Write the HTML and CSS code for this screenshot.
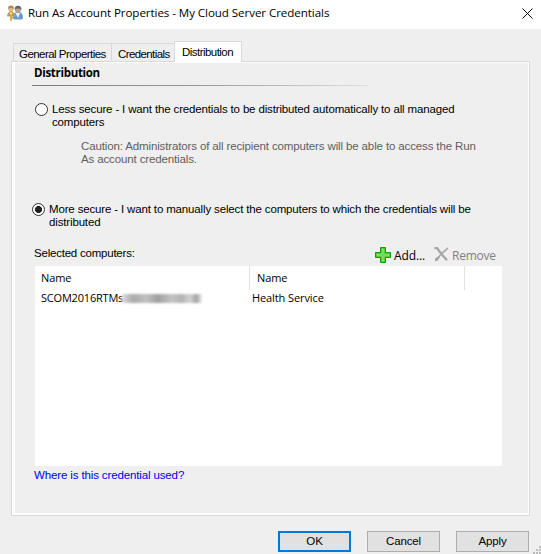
FILE: index.html
```
<!DOCTYPE html>
<html lang="en">
<head>
<meta charset="utf-8">
<title>Run As Account Properties</title>
<link rel="stylesheet" href="styles.css">
</head>
<body>
<div class="dialog">
  <header class="titlebar">
    <svg class="app-icon" width="17" height="17" viewBox="0 0 17 17">
      <path d="M6 13c0-4 1.500-6 5-6s5 2 5 6l-1 1.500H7z" fill="#6b9ad0"/>
      <path d="M8.500 8l2.500 5 2-5z" fill="#eef3f9"/>
      <circle cx="11" cy="4.500" r="3.200" fill="#c0a08c"/>
      <path d="M7.700 4.500C7.500 2 9 .8 11 .8s3.700 1.200 3.400 4C13 3.300 10 3 7.700 4.500z" fill="#5b6770"/>
      <path d="M0 11.500c0-3 1.200-4.500 4-4.500s4.300 1.500 4.300 4.500z" fill="#9aa7ad"/>
      <circle cx="4" cy="4" r="2.700" fill="#e5b887"/>
      <path d="M1 4C.8 1.200 2.500.5 4.200.6 6.200.7 7.200 2 6.800 4 5 2.700 3 2.700 1 4z" fill="#a98a5a"/>
      <circle cx="4" cy="8.700" r="2.200" fill="#f5bd3c" stroke="#b07c1c" stroke-width=".7"/>
      <path d="M3.200 10.500h1.600v4.800l-.8.900-.8-.9zM4.800 12.300h1.400v1.500H4.800z" fill="#dc9d1b"/>
      <circle cx="4" cy="8.200" r=".7" fill="#fff"/>
    </svg>
    <h1 class="title">Run As Account Properties - My Cloud Server Credentials</h1>
    <svg class="close" width="11" height="11" viewBox="0 0 11 11"><path d="M.5.500l10 10M10.500.500l-10 10" stroke="#000" fill="none"/></svg>
  </header>
  <nav class="tabs">
    <div class="tab tab-general">General Properties</div>
    <div class="tab tab-credentials">Credentials</div>
    <div class="tab tab-active">Distribution</div>
  </nav>
  <main class="page">
    <h2 class="heading">Distribution</h2>
    <div class="rule"></div>
    <div class="option option-less">
      <span class="radio"></span>
      <span>Less secure - I want the credentials to be distributed automatically to all managed<br>computers</span>
    </div>
    <p class="caution">Caution: Administrators of all recipient computers will be able to access the Run<br>As account credentials.</p>
    <div class="option option-more">
      <span class="radio radio-checked"></span>
      <span>More secure - I want to manually select the computers to which the credentials will be<br>distributed</span>
    </div>
    <div class="toolbar">
      <span class="caption">Selected computers:</span>
      <span class="action action-add">
        <svg width="16" height="16" viewBox="0 0 16 16">
          <path d="M5.500.500h5v5h5v5h-5v5h-5v-5h-5v-5h5z" fill="#3fc42c" stroke="#139a10" stroke-linejoin="round"/>
          <path d="M6.700 1.700h2.600v5h5v2.600h-5v5H6.700v-5h-5V6.700h5z" fill="#8be875"/>
          <path d="M7.500 3v4.500H3v1h4.500V13h1V8.500H13v-1H8.500V3z" fill="#5cd548"/>
        </svg>
        Add...
      </span>
      <span class="action action-remove">
        <svg width="15" height="15" viewBox="0 0 15 15">
          <path d="M.5 1.500L3 .8C5 4 9 9 13 13.200" fill="none" stroke="#a4a4a4" stroke-width="2.200"/>
          <path d="M14 1C9.500 4.500 5 9 2.200 13.500" fill="none" stroke="#adadad" stroke-width="1.700"/>
          <path d="M1 11.500l4-2.500 1 1.500-3 3.500H1z" fill="#a6a6a6"/>
        </svg>
        Remove
      </span>
    </div>
    <div class="list">
      <div class="list-head"><span class="col-computer">Name</span><span class="col-class">Name</span></div>
      <div class="list-row"><span class="cell-computer">SCOM2016RTMs<i class="redacted"></i></span><span>Health Service</span></div>
    </div>
    <a class="link">Where is this credential used?</a>
  </main>
  <footer class="buttons">
    <button class="btn btn-ok">OK</button>
    <button class="btn">Cancel</button>
    <button class="btn">Apply</button>
  </footer>
  <svg class="grip" width="8" height="8" viewBox="0 0 8 8"><path d="M6 0h2v2H6zM3 3h2v2H3zM6 3h2v2H6zM0 6h2v2H0zM3 6h2v2H3zM6 6h2v2H6z" fill="#bcbcbc"/></svg>
</div>
</body>
</html>
```
FILE: styles.css
```
* { box-sizing: border-box; }
body { margin: 0; }
.dialog {
  position: relative;
  width: 541px;
  height: 554px;
  overflow: hidden;
  background: #efefef;
  color: #000;
  font: 11.5px/13px "Liberation Sans", Arial, sans-serif;
  letter-spacing: -0.15px;
  white-space: nowrap;
}
h1, h2, p { margin: 0; }

.titlebar { display: flex; height: 29px; padding: 5px 8px 0 7px; background: #fff; }
.title {
  flex: 1;
  margin-left: 4px;
  font: 400 11.6px/16px "Open Sans", sans-serif;
  letter-spacing: -0.075px;
}
.close { margin-top: 3px; }

.tabs { display: flex; align-items: flex-end; height: 33px; padding-left: 13px; letter-spacing: -0.54px; }
.tab { height: 19px; padding-top: 4px; border: 1px solid #d9d9d9; border-bottom: 0; }
.tab-general { width: 99px; padding-left: 5px; }
.tab-credentials { width: 62px; padding-left: 6px; border-left: 0; border-right: 0; letter-spacing: -0.6px; }
.tab-active {
  z-index: 1;
  width: 68px;
  height: 21px;
  padding: 4px 0 0 7px;
  background: #fff;
}

.page {
  width: 519px;
  height: 455px;
  margin: -1px 0 0 11px;
  padding: 3px 0 0 20px;
  border: 1px solid #d9d9d9;
  box-shadow: inset 3px 0 #fff, inset -1px 0 #fff, inset 0 1px #fff, inset 0 -2px #fff;
}
.heading { padding-left: 2px; font: 700 11.5px/16px "Open Sans", sans-serif; letter-spacing: -0.3px; }
.rule { width: 337px; height: 1px; margin-top: 4px; background: linear-gradient(90deg, #7c7c7c, #9a9a9a 50%, #e0e0e0); }

.option { display: flex; gap: 4px; }
.option-less { margin: 17px 0 0 3px; }
.option-more { margin-top: 37px; letter-spacing: -0.15px; }
.radio { width: 13px; height: 13px; border: 1px solid #333; border-radius: 50%; background: #fff; }
.radio-checked { background: radial-gradient(circle, #222 3.300px, #fff 3.800px); }
.caution { margin: 11px 0 0 49px; color: #5e5e5e; letter-spacing: -0.13px; }

.toolbar { display: flex; height: 19px; margin-top: 18px; padding-left: 2px; }
.caption { width: 341px; letter-spacing: -0.22px; }
.action { display: flex; gap: 3px; font: 12px/17px "Open Sans", sans-serif; letter-spacing: -0.1px; }
.action-add { width: 59px; }
.action-remove { color: #7f7f7f; letter-spacing: -0.25px; }

.list {
  width: 467px;
  height: 200px;
  margin-left: 3px;
  background: #fff;
  font: 11px/16px "Open Sans", sans-serif;
  letter-spacing: -0.1px;
}
.list-head { display: flex; height: 24px; }
.list-head span { padding: 4px 0 0 7px; border-right: 1px solid #e2e2e2; }
.list-head .col-computer { width: 215px; padding-left: 6px; }
.list-head .col-class { width: 215px; }
.list-row { display: flex; padding: 0 0 0 6px; }
.cell-computer { display: flex; width: 211px; letter-spacing: -0.2px; }
.redacted {
  width: 80px;
  height: 9px;
  margin: 4px 0 0 -1px;
  background: linear-gradient(90deg, #ddd, #aaa 14%, #c0c0c0 30%, #a0a0a0 45%, #c4c4c4 62%, #b4b4b4 75%, #d4d4d4 85%, #a4a4a4 93%, #eee);
  filter: blur(1px);
}
.link { display: block; margin: 3px 0 0 2px; color: #00f; letter-spacing: -0.13px; }

.buttons { display: flex; justify-content: flex-end; gap: 16px; padding: 15px 12px 0 0; }
.btn {
  width: 73px;
  height: 21px;
  padding: 0;
  border: 1px solid #adadad;
  background: #e1e1e1;
  color: #000;
  font: inherit;
  letter-spacing: -0.14px;
}
.btn-ok { border: 2px solid #0078d7; }
.grip { position: absolute; right: 0; bottom: 0; }
```
